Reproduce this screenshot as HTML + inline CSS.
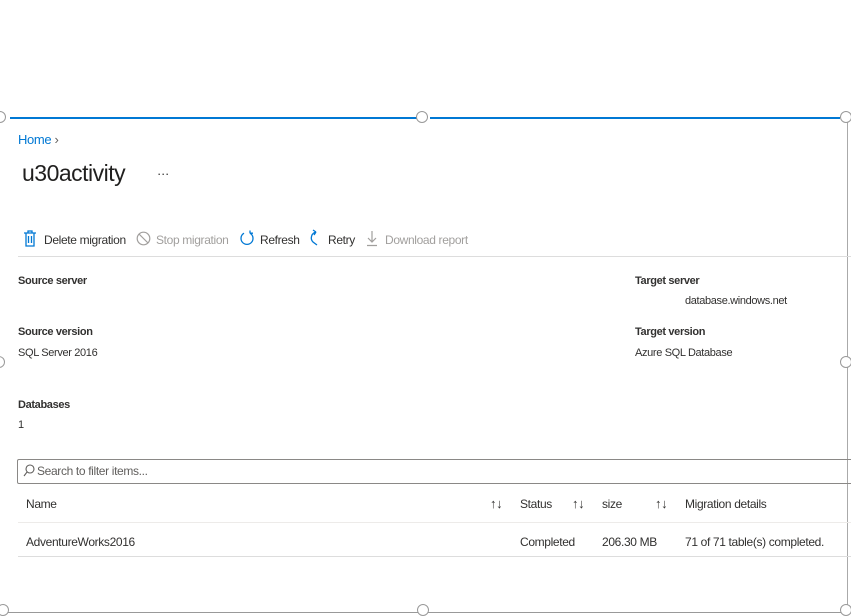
<!DOCTYPE html>
<html><head><meta charset="utf-8"><style>
*{margin:0;padding:0;box-sizing:border-box}
body{width:851px;height:615px;background:#fff;position:relative;overflow:hidden;font-family:"Liberation Sans",sans-serif;color:#323130;font-size:12px;letter-spacing:-0.35px}
.a{position:absolute;white-space:nowrap}
.b{font-weight:bold;font-size:11px}
.h{position:absolute;width:12px;height:12px;border:1.5px solid #999;border-radius:50%;background:#fff}
.g{color:#a19f9d}
</style></head><body>
<div class="a" style="left:10px;top:117px;width:410px;height:2px;background:#0078d4"></div>
<div class="a" style="left:430px;top:117px;width:410px;height:2px;background:#0078d4"></div>
<div class="a" style="left:847px;top:118px;width:1px;height:497px;background:#aaa"></div>
<div class="a" style="left:0;top:612px;width:851px;height:1px;background:#999"></div>
<div class="h" style="left:-6px;top:111px"></div>
<div class="h" style="left:416px;top:111px"></div>
<div class="h" style="left:840px;top:111px"></div>
<div class="h" style="left:-7px;top:356px"></div>
<div class="h" style="left:840px;top:356px"></div>
<div class="h" style="left:-3px;top:604px"></div>
<div class="h" style="left:417px;top:604px"></div>
<div class="h" style="left:840px;top:604px"></div>

<div class="a" style="left:18px;top:132px;color:#0078d4;font-size:13px">Home <span style="color:#605e5c">›</span></div>
<div class="a" style="left:22px;top:160px;font-size:23px;color:#201f1e;letter-spacing:-0.5px">u30activity</div>
<div class="a" style="left:157px;top:166px;font-size:13px">···</div>

<svg class="a" style="left:23px;top:230px" width="14" height="17" viewBox="0 0 14 17"><path d="M1 3h12M5 3V1h4v2M3 3v13h8V3M5.5 6v7M8.5 6v7" fill="none" stroke="#0078d4" stroke-width="1.3"/></svg>
<div class="a" style="left:44px;top:233px">Delete migration</div>
<svg class="a" style="left:136px;top:231px" width="15" height="15"><circle cx="7.5" cy="7.5" r="6.3" fill="none" stroke="#a19f9d" stroke-width="1.2"/><path d="M3 3l9 9" stroke="#a19f9d" stroke-width="1.2"/></svg>
<div class="a g" style="left:156px;top:233px">Stop migration</div>
<svg class="a" style="left:239px;top:230px" width="16" height="17"><path d="M5 3.2A6 6 0 1 0 11 3.2M11 3.2V0.5M11 3.2H14" fill="none" stroke="#0078d4" stroke-width="1.3"/></svg>
<div class="a" style="left:260px;top:233px">Refresh</div>
<svg class="a" style="left:308px;top:229px" width="14" height="18"><path d="M8 3A6 6 0 0 0 5 13l4 3M8 3L5 1M8 3L6 6" fill="none" stroke="#0078d4" stroke-width="1.3"/></svg>
<div class="a" style="left:328px;top:233px">Retry</div>
<svg class="a" style="left:366px;top:230px" width="12" height="17"><path d="M6 1v11M2 8l4 4 4-4M1 15.5h10" fill="none" stroke="#a19f9d" stroke-width="1.2"/></svg>
<div class="a g" style="left:385px;top:233px">Download report</div>
<div class="a" style="left:18px;top:256px;width:833px;height:1px;background:#ddd"></div>

<div class="a b" style="left:18px;top:275px">Source server</div>
<div class="a b" style="left:18px;top:326px">Source version</div>
<div class="a" style="left:18px;top:347px;font-size:11px">SQL Server 2016</div>
<div class="a b" style="left:18px;top:399px">Databases</div>
<div class="a" style="left:18px;top:419px;font-size:11px">1</div>
<div class="a b" style="left:635px;top:275px">Target server</div>
<div class="a" style="left:685px;top:295px;font-size:11px">database.windows.net</div>
<div class="a b" style="left:635px;top:326px">Target version</div>
<div class="a" style="left:635px;top:347px;font-size:11px">Azure SQL Database</div>

<div class="a" style="left:17px;top:459px;width:840px;height:25px;border:1px solid #8a8886;border-radius:2px"></div>
<svg class="a" style="left:23px;top:464px" width="12" height="14"><circle cx="7" cy="5" r="4" fill="none" stroke="#605e5c" stroke-width="1.1"/><path d="M4.2 7.8L1 12" stroke="#605e5c" stroke-width="1.1"/></svg>
<div class="a" style="left:37px;top:464px;color:#605e5c">Search to filter items...</div>

<div class="a" style="left:26px;top:497px">Name</div>
<div class="a" style="left:490px;top:496px;font-size:13px">↑↓</div>
<div class="a" style="left:520px;top:497px">Status</div>
<div class="a" style="left:572px;top:496px;font-size:13px">↑↓</div>
<div class="a" style="left:602px;top:497px">size</div>
<div class="a" style="left:655px;top:496px;font-size:13px">↑↓</div>
<div class="a" style="left:685px;top:497px">Migration details</div>
<div class="a" style="left:18px;top:522px;width:833px;height:1px;background:#edebe9"></div>
<div class="a" style="left:26px;top:535px">AdventureWorks2016</div>
<div class="a" style="left:520px;top:535px">Completed</div>
<div class="a" style="left:602px;top:535px">206.30 MB</div>
<div class="a" style="left:685px;top:535px">71 of 71 table(s) completed.</div>
<div class="a" style="left:18px;top:556px;width:833px;height:1px;background:#ddd"></div>
</body></html>
